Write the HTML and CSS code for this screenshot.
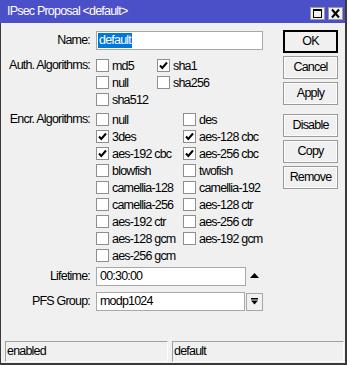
FILE: index.html
```html
<!DOCTYPE html>
<html>
<head>
<meta charset="utf-8">
<link rel="stylesheet" href="styles.css">
</head>
<body>
<div class="window">
  <div class="titlebar">
    <span class="title">IPsec Proposal &lt;default&gt;</span>
    <div class="tbtns">
      <span class="tbtn"><svg width="13" height="11" viewBox="0 0 13 11"><rect x="2.5" y="1.5" width="8" height="8" fill="none" stroke="#000" stroke-width="1"/><rect x="2" y="1" width="9" height="2" fill="#000"/></svg></span>
      <span class="tbtn"><svg width="13" height="11" viewBox="0 0 13 11"><path d="M3 1.5 L10 9.5 M10 1.5 L3 9.5" stroke="#000" stroke-width="2" fill="none"/></svg></span>
    </div>
  </div>
  <div class="main">
    <div class="form">
      <div class="row name-row">
        <div class="lbl">Name:</div>
        <div class="input name-input"><span class="sel">default</span></div>
      </div>
      <div class="row auth-row">
        <div class="lbl">Auth. Algorithms:</div>
        <div class="checks auth">
          <div class="chk"><span class="box"></span>md5</div>
          <div class="chk"><span class="box on"><svg width="11" height="11" viewBox="0 0 11 11"><path d="M2 5.5 L4.3 8 L9 2.5" stroke="#000" stroke-width="2" fill="none"/></svg></span>sha1</div>
          <div class="chk"><span class="box"></span>null</div>
          <div class="chk"><span class="box"></span>sha256</div>
          <div class="chk"><span class="box"></span>sha512</div>
        </div>
      </div>
      <div class="row encr-row">
        <div class="lbl">Encr. Algorithms:</div>
        <div class="checks encr">
          <div class="chk"><span class="box"></span>null</div>
          <div class="chk"><span class="box"></span>des</div>
          <div class="chk"><span class="box on"><svg width="11" height="11" viewBox="0 0 11 11"><path d="M2 5.5 L4.3 8 L9 2.5" stroke="#000" stroke-width="2" fill="none"/></svg></span>3des</div>
          <div class="chk"><span class="box on"><svg width="11" height="11" viewBox="0 0 11 11"><path d="M2 5.5 L4.3 8 L9 2.5" stroke="#000" stroke-width="2" fill="none"/></svg></span>aes-128 cbc</div>
          <div class="chk"><span class="box on"><svg width="11" height="11" viewBox="0 0 11 11"><path d="M2 5.5 L4.3 8 L9 2.5" stroke="#000" stroke-width="2" fill="none"/></svg></span>aes-192 cbc</div>
          <div class="chk"><span class="box on"><svg width="11" height="11" viewBox="0 0 11 11"><path d="M2 5.5 L4.3 8 L9 2.5" stroke="#000" stroke-width="2" fill="none"/></svg></span>aes-256 cbc</div>
          <div class="chk"><span class="box"></span>blowfish</div>
          <div class="chk"><span class="box"></span>twofish</div>
          <div class="chk"><span class="box"></span>camellia-128</div>
          <div class="chk"><span class="box"></span>camellia-192</div>
          <div class="chk"><span class="box"></span>camellia-256</div>
          <div class="chk"><span class="box"></span>aes-128 ctr</div>
          <div class="chk"><span class="box"></span>aes-192 ctr</div>
          <div class="chk"><span class="box"></span>aes-256 ctr</div>
          <div class="chk"><span class="box"></span>aes-128 gcm</div>
          <div class="chk"><span class="box"></span>aes-192 gcm</div>
          <div class="chk"><span class="box"></span>aes-256 gcm</div>
        </div>
      </div>
      <div class="row life-row">
        <div class="lbl">Lifetime:</div>
        <div class="input field">00:30:00</div>
        <svg class="uparrow" width="9" height="5" viewBox="0 0 9 5"><path d="M0 5 L4.5 0 L9 5 Z" fill="#000"/></svg>
      </div>
      <div class="row pfs-row">
        <div class="lbl">PFS Group:</div>
        <div class="input field pfs">modp1024</div>
        <span class="drop"><svg width="7" height="7" viewBox="0 0 7 7"><rect x="0" y="0" width="7" height="1.5" fill="#000"/><path d="M0 2.5 L7 2.5 L3.5 6.5 Z" fill="#000"/></svg></span>
      </div>
    </div>
    <div class="buttons">
      <div class="btn default">OK</div>
      <div class="btn">Cancel</div>
      <div class="btn">Apply</div>
      <div class="btn sep">Disable</div>
      <div class="btn">Copy</div>
      <div class="btn">Remove</div>
    </div>
  </div>
  <div class="status">
    <div class="cell c1">enabled</div>
    <div class="cell c2">default</div>
  </div>
</div>
</body>
</html>
```
FILE: styles.css
```css
html, body {
  margin: 0;
  padding: 0;
  background: #ffffff;
}
body {
  width: 350px;
  height: 365px;
  overflow: hidden;
  font-family: "Liberation Sans", Arial, sans-serif;
  font-size: 12.5px;
  letter-spacing: -0.8px;
  color: #000;
}
.window {
  width: 347px;
  height: 365px;
  box-sizing: border-box;
  background: #f0f0f0;
  border-left: 1px solid #3a3a3a;
  border-right: 2px solid #3a3a3a;
  border-bottom: 2px solid #3a3a3a;
  display: flex;
  flex-direction: column;
}
.titlebar {
  height: 23px;
  background: #4c50c8;
  display: flex;
  align-items: center;
  justify-content: space-between;
  padding: 0 2px 0 7px;
  margin-left: -1px;
}
.title {
  color: #fff;
  line-height: 23px;
}
.tbtns {
  display: flex;
  gap: 3px;
  padding-top: 4px;
}
.tbtn {
  width: 15px;
  height: 13px;
  box-sizing: border-box;
  background: #f0f0f0;
  border: 1px solid #9a9a9a;
  display: flex;
  align-items: center;
  justify-content: center;
}
.main {
  display: flex;
  flex: 1;
}
.form {
  flex: 1;
  padding-top: 8px;
}
.row {
  display: flex;
  align-items: flex-start;
}
.lbl {
  width: 89px;
  margin-right: 6px;
  text-align: right;
  white-space: nowrap;
  line-height: 17px;
}
.name-row .lbl { line-height: 19px; }
.input {
  height: 19px;
  box-sizing: border-box;
  background: #fff;
  border: 1px solid #a8a8a8;
  line-height: 17px;
  white-space: nowrap;
}
.name-input {
  width: 167px;
  padding-left: 1px;
}
.sel {
  background: #0078d7;
  color: #fff;
  display: inline-block;
  line-height: 15px;
  padding: 0 1px;
}
.auth-row { margin-top: 7px; }
.encr-row { margin-top: 3px; }
.checks {
  display: grid;
  grid-auto-rows: 17px;
}
.auth { grid-template-columns: 61px 100px; }
.encr { grid-template-columns: 87px 100px; }
.chk {
  display: flex;
  align-items: center;
  gap: 3px;
  white-space: nowrap;
}
.box {
  width: 13px;
  height: 13px;
  box-sizing: border-box;
  background: #fff;
  border: 1px solid #8e8e8e;
  flex: none;
  display: flex;
  align-items: center;
  justify-content: center;
}
.life-row {
  margin-top: 3px;
  align-items: center;
}
.life-row .lbl, .pfs-row .lbl { line-height: 19px; }
.field {
  width: 150px;
  padding-left: 3px;
}
.uparrow {
  margin-left: 4px;
  margin-top: -2px;
}
.pfs-row {
  margin-top: 6px;
  align-items: center;
}
.pfs { width: 149px; }
.drop {
  width: 17px;
  height: 18px;
  box-sizing: border-box;
  margin-left: 1px;
  background: #f0f0f0;
  border: 1px solid #a8a8a8;
  display: flex;
  align-items: center;
  justify-content: center;
}
.buttons {
  width: 59px;
  margin-right: 7px;
  padding-top: 7px;
  display: flex;
  flex-direction: column;
  gap: 3px;
}
.btn {
  height: 23px;
  box-sizing: border-box;
  border: 1px solid #9a9a9a;
  box-shadow: inset 0 0 0 1px #fbfbfb;
  background: #f0f0f0;
  text-align: center;
  line-height: 21px;
}
.btn.default {
  border: 1px solid #000;
  box-shadow: inset 0 0 0 1px #000;
}
.btn.sep { margin-top: 6px; }
.status {
  display: flex;
  gap: 4px;
  padding: 0 1px 1px 4px;
}
.cell {
  height: 21px;
  box-sizing: border-box;
  border-top: 1px solid #a0a0a0;
  border-left: 1px solid #a0a0a0;
  border-right: 1px solid #fdfdfd;
  border-bottom: 1px solid #fdfdfd;
  line-height: 19px;
  padding-left: 1px;
  white-space: nowrap;
}
.c1 { width: 163px; }
.c2 { flex: 1; }
```
